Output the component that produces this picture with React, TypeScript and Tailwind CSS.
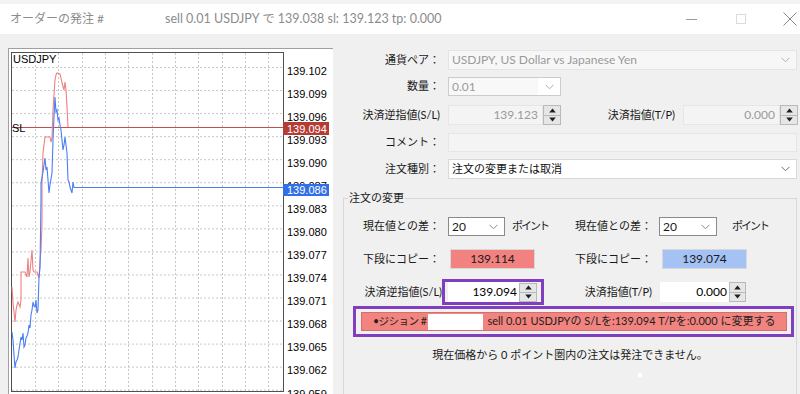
import React from 'react'

const font = { fontFamily: 'Lato, "Noto Sans CJK JP", sans-serif' }

const prices = [
  '139.102', '139.099', '139.096', '139.093', '139.090', '139.087', '139.083', '139.080',
  '139.077', '139.074', '139.071', '139.068', '139.065', '139.062', '139.059',
]

const redPts = [
  [12, 287], [13, 303], [15, 322], [16, 310], [17, 305], [18, 302], [20, 307], [21, 300], [21, 272],
  [25, 272], [27, 277], [28, 258], [29, 277], [30, 272], [32, 250], [33, 270], [34, 272], [37, 272],
  [39, 278], [40, 262], [41, 250], [42, 225], [42, 185], [43, 153], [45, 137], [50, 137], [51, 142],
  [52, 138], [53, 110], [55, 80], [56, 75], [57, 73], [60, 74], [61, 78], [62, 83], [64, 90], [65, 82],
  [66, 90], [67, 107], [68, 127],
]

const bluePts = [
  [12, 332], [13, 340], [14, 355], [15, 368], [16, 362], [17, 360], [18, 357], [19, 350], [21, 337],
  [22, 340], [23, 333], [24, 347], [25, 345], [26, 338], [27, 336], [28, 333], [29, 325], [30, 328],
  [31, 315], [32, 310], [33, 302], [34, 306], [35, 307], [36, 300], [37, 313], [38, 310], [39, 277],
  [40, 268], [41, 200], [41, 183], [43, 172], [44, 165], [45, 158], [46, 170], [47, 167], [48, 180],
  [49, 193], [50, 185], [52, 173], [53, 140], [54, 117], [55, 97], [56, 112], [57, 110], [58, 120],
  [59, 118], [60, 125], [61, 130], [62, 140], [63, 150], [64, 145], [65, 137], [66, 145], [67, 153],
  [68, 180], [69, 182], [70, 187], [71, 190], [72, 193], [73, 182], [74, 187.5], [75, 187.5], [283, 187.5],
]

const toPath = (pts: number[][]) => pts.map((p, i) => `${i ? 'L' : 'M'}${p[0]} ${p[1]}`).join(' ')

function Chart() {
  const vx = [35, 58, 82, 105, 128, 152, 175, 198, 222, 245, 268]
  return (
    <svg width="324" height="345" viewBox="9 49 324 345" className="block">
      <rect x="9" y="49" width="324" height="345" fill="#ffffff" />
      {vx.map((x) => (
        <line key={x} x1={x + 0.5} y1="53" x2={x + 0.5} y2="391" stroke="#c8c8c8" strokeDasharray="2 2" />
      ))}
      {prices.map((_, i) => (
        <line key={i} x1="12" y1={67.5 + 23.05 * i} x2="283" y2={67.5 + 23.05 * i} stroke="#c8c8c8" strokeDasharray="2 2" />
      ))}
      <rect x="11.5" y="52.5" width="272" height="339" fill="none" stroke="#505050" />
      <line x1="12" y1="127.5" x2="283" y2="127.5" stroke="#c0504d" />
      <path d={toPath(redPts)} fill="none" stroke="#f08080" strokeWidth="1.1" />
      <path d={toPath(bluePts)} fill="none" stroke="#4a7ef5" strokeWidth="1.1" />
      <text x="13" y="63" fontSize="11" fill="#000" fontFamily="Liberation Sans, sans-serif">USDJPY</text>
      <text x="12" y="131.5" fontSize="11" fill="#000" fontFamily="Liberation Sans, sans-serif">SL</text>
      {prices.map((p, i) => (
        <text key={p} x="287" y={74.8 + 23.05 * i} fontSize="11" fill="#000" fontFamily="Liberation Sans, sans-serif">
          {p}
        </text>
      ))}
      <rect x="283" y="122" width="46" height="13" fill="#b53c35" />
      <text x="287" y="132.5" fontSize="11" fill="#fff" fontFamily="Liberation Sans, sans-serif">139.094</text>
      <rect x="283" y="184" width="46" height="12" fill="#2f6fe8" />
      <text x="287" y="194" fontSize="11" fill="#fff" fontFamily="Liberation Sans, sans-serif">139.086</text>
    </svg>
  )
}

function Chevron({ color = '#8a8a8a' }: { color?: string }) {
  return (
    <svg width="9" height="6" viewBox="0 0 9 6">
      <path d="M0.5 0.8 L4.5 4.8 L8.5 0.8" fill="none" stroke={color} strokeWidth="1" />
    </svg>
  )
}

function Spinner({ h = 'h-[20px]', w = 'w-[18px]' }: { h?: string; w?: string }) {
  return (
    <div className={`${h} ${w} flex flex-col border border-[#b9b9b9] bg-[#e6e6e6]`}>
      <div className="flex-1 flex items-center justify-center border-b border-[#b9b9b9]">
        <svg width="7" height="5" viewBox="0 0 7 5"><path d="M3.5 0.5 L6.8 4.5 L0.2 4.5 Z" fill="#202020" /></svg>
      </div>
      <div className="flex-1 flex items-center justify-center">
        <svg width="7" height="5" viewBox="0 0 7 5"><path d="M0.2 0.5 L6.8 0.5 L3.5 4.5 Z" fill="#202020" /></svg>
      </div>
    </div>
  )
}

export default function App() {
  return (
    <div className="w-[800px] h-[394px] bg-[#f0f0f0] overflow-hidden text-[11px] text-[#1a1a1a]" style={font}>
      {/* title bar */}
      <div className="h-[4px] bg-[#f3f3f3]" />
      <div className="h-[30px] bg-white flex items-center text-[12.5px] text-[#8c8c8c]">
        <span className="pl-[10px] w-[165px] text-[12px]">オーダーの発注 #</span>
        <span>sell 0.01 USDJPY で 139.038 sl: 139.123 tp: 0.000</span>
        <div className="ml-auto flex items-center">
          <div className="w-[11px] h-px bg-[#9a9a9a]" />
          <div className="ml-[39px] w-[10px] h-[10px] border border-[#dadada]" />
          <svg className="ml-[37px] mr-[3px]" width="14" height="14" viewBox="0 0 14 14">
            <path d="M0.5 0.5 L13.5 13.5 M13.5 0.5 L0.5 13.5" stroke="#8a8a8a" strokeWidth="1" />
          </svg>
        </div>
      </div>

      <div className="flex">
        {/* chart */}
        <div className="ml-[8px] mt-[14px] border-l border-t border-[#a0a0a0] bg-white">
          <Chart />
        </div>

        {/* form */}
        <div className="ml-[7px] w-[460px] pt-[16px]">
          <div className="flex items-center h-[20px]">
            <div className="w-[100px] text-right">通貨ペア：</div>
            <div className="ml-[8px] w-[349px] h-[20px] bg-[#f7f7f7] border border-[#e4e4e4] flex items-center pl-[3px] pr-[6px] text-[12px] text-[#9a9a9a]">
              <span className="flex-1">USDJPY, US Dollar vs Japanese Yen</span>
              <Chevron color="#b0b0b0" />
            </div>
          </div>

          <div className="flex items-center h-[19px] mt-[7px]">
            <div className="w-[100px] text-right">数量：</div>
            <div className="ml-[8px] w-[113px] h-[19px] bg-[#f8f8f8] border border-[#cccccc] flex items-center text-[12px] text-[#9a9a9a]">
              <span className="flex-1 pl-[3px]">0.01</span>
              <div className="w-[22px] h-full bg-white flex items-center justify-center">
                <Chevron color="#b0b0b0" />
              </div>
            </div>
          </div>

          <div className="flex items-center h-[20px] mt-[9px]">
            <div className="w-[100px] text-right">決済逆指値(S/L)</div>
            <div className="ml-[8px] w-[95px] h-[20px] bg-[#f4f4f4] border border-[#e6e6e6] text-right pr-[4px] leading-[18px] text-[12px] text-[#9a9a9a]">139.123</div>
            <Spinner />
            <div className="w-[114px] text-right">決済指値(T/P)</div>
            <div className="ml-[8px] w-[97px] h-[20px] bg-[#f4f4f4] border border-[#e6e6e6] text-right pr-[4px] leading-[18px] text-[12px] text-[#9a9a9a]">0.000</div>
            <Spinner />
          </div>

          <div className="flex items-center h-[19px] mt-[8px]">
            <div className="w-[100px] text-right">コメント：</div>
            <div className="ml-[8px] w-[349px] h-[19px] bg-[#f4f4f4] border border-[#e6e6e6]" />
          </div>

          <div className="flex items-center h-[20px] mt-[7px]">
            <div className="w-[100px] text-right">注文種別：</div>
            <div className="ml-[8px] w-[349px] h-[20px] bg-white border border-[#d9d9d9] flex items-center pl-[3px] pr-[6px] text-[#111]">
              <span className="flex-1">注文の変更または取消</span>
              <Chevron color="#707070" />
            </div>
          </div>

          {/* group */}
          <div className="relative mt-[19px] w-[454px] h-[197px] ml-[3px] border border-[#d8d8d8] pt-[18px]">
            <span className="absolute left-[4px] -top-[9px] px-[1px] leading-[16px] bg-[#f0f0f0]">注文の変更</span>

            <div className="flex items-center h-[19px]">
              <div className="w-[96px] text-right">現在値との差：</div>
              <div className="ml-[8px] w-[57px] h-[19px] bg-white border border-[#8a8a8a] flex items-center pl-[3px] pr-[6px] text-[12px]">
                <span className="flex-1">20</span>
                <Chevron />
              </div>
              <span className="ml-[7px] w-[40px] whitespace-nowrap tracking-[-2px]">ポイント</span>
              <div className="w-[100px] text-right">現在値との差：</div>
              <div className="ml-[7px] w-[58px] h-[19px] bg-white border border-[#8a8a8a] flex items-center pl-[3px] pr-[6px] text-[12px]">
                <span className="flex-1">20</span>
                <Chevron />
              </div>
              <span className="ml-[15px] whitespace-nowrap tracking-[-2px]">ポイント</span>
            </div>

            <div className="flex items-center h-[20px] mt-[13px]">
              <div className="w-[96px] text-right">下段にコピー：</div>
              <div className="ml-[10px] w-[85px] h-[20px] bg-[#f2827f] border border-[#d8d8d8] text-center leading-[18px] text-[12px]">139.114</div>
              <div className="w-[117px] text-right">下段にコピー：</div>
              <div className="ml-[10px] w-[85px] h-[20px] bg-[#a4c2f4] border border-[#d8d8d8] text-center leading-[18px] text-[12px]">139.074</div>
            </div>

            <div className="flex items-center h-[26px] mt-[10px]">
              <div className="w-[98px] text-right">決済逆指値(S/L)</div>
              <div className="w-[102px] h-[26px] border-[3px] border-[#7f3fbf] flex items-center pl-[3px]">
                <div className="w-[71px] h-[20px] bg-white text-right pr-[2px] leading-[20px] text-[12px] text-[#000]">139.094</div>
                <Spinner h="h-[19px]" />
              </div>
              <div className="w-[108px] text-right">決済指値(T/P)</div>
              <div className="ml-[8px] w-[69px] h-[20px] bg-white text-right pr-[2px] leading-[20px] text-[12px] text-[#000]">0.000</div>
              <Spinner h="h-[20px]" w="w-[17px]" />
            </div>

            <div className="ml-[9px] mt-[1px] w-[441px] h-[31px] border-[3px] border-[#7f3fbf] flex items-center pl-[5px]">
              <div className="w-[426px] h-[19px] bg-[#f2837f] border border-[#d07070] flex items-center pl-[11px] text-[#222] whitespace-nowrap">
                <span className="text-[10.5px] tracking-[-0.5px]">•ジション #</span>
                <div className="ml-[2px] w-[55px] h-[16px] bg-white" />
                <span className="ml-[4px]">sell 0.01 USDJPYの S/Lを:139.094 T/Pを:0.000 に変更する</span>
              </div>
            </div>

            <div className="mt-[9px] h-[18px] leading-[18px] text-center">現在価格から 0 ポイント圏内の注文は発注できません。</div>
            <div className="mt-[9px] ml-[294px] w-[4px] h-[4px] bg-white" />
          </div>
        </div>
      </div>
    </div>
  )
}
